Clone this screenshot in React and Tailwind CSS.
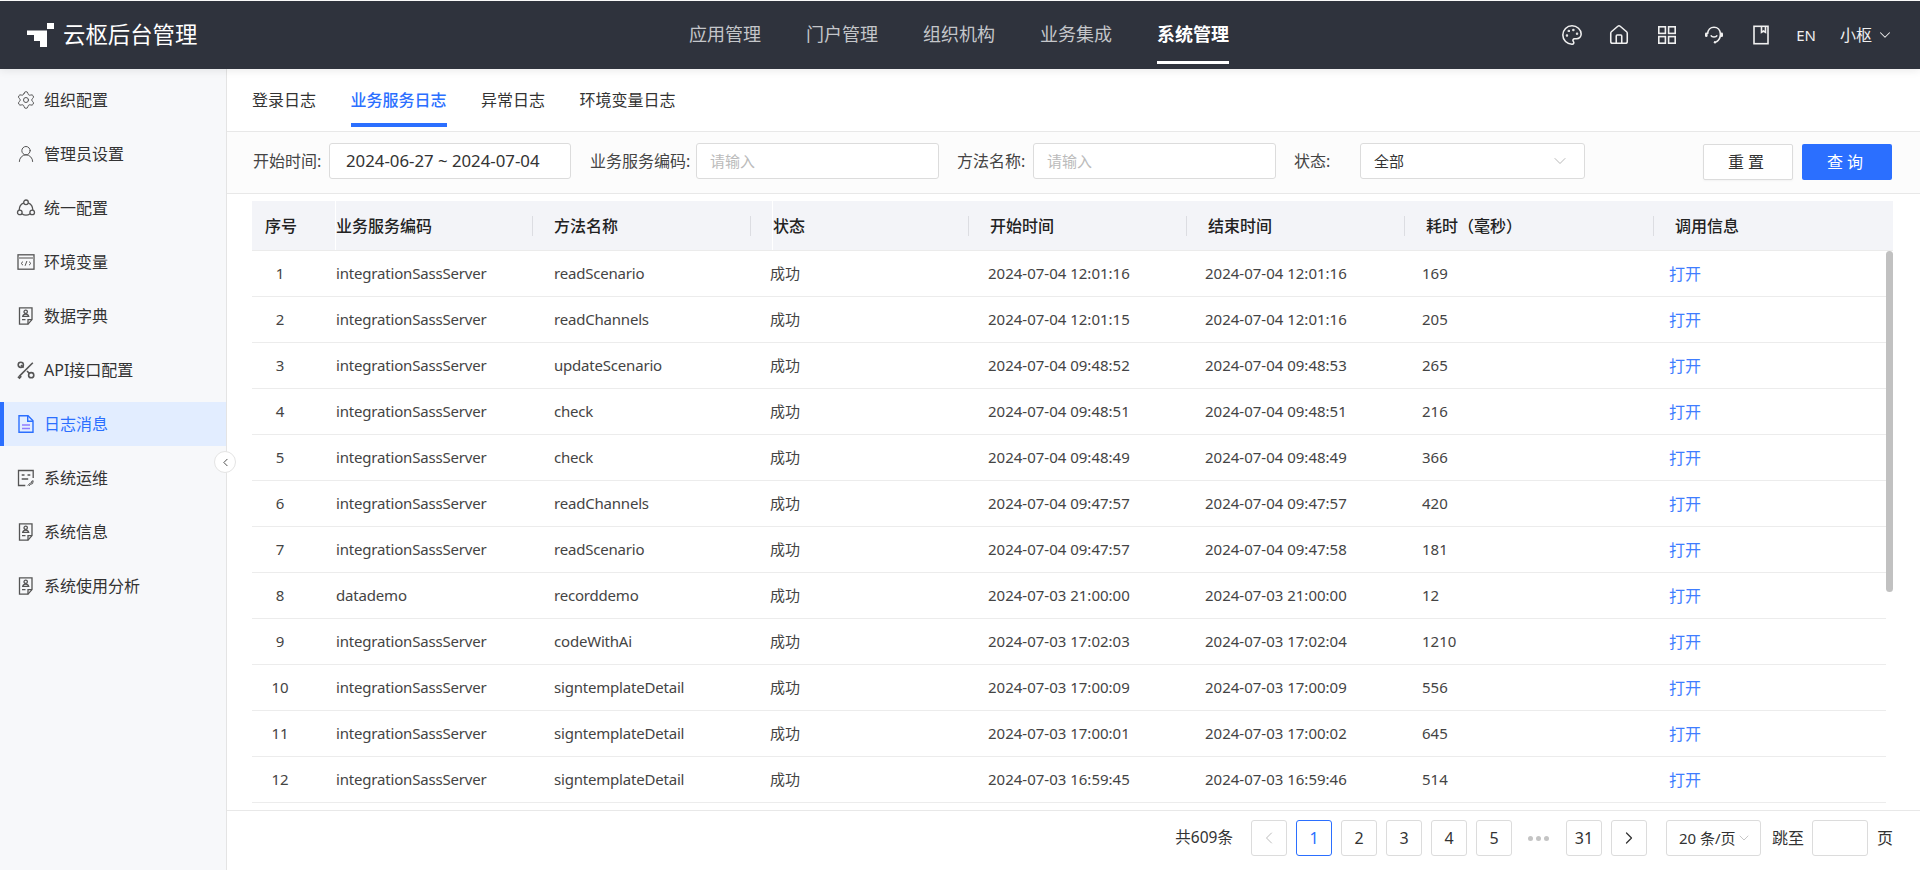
import { ChevronDown, ChevronLeft, ChevronRight, House, Palette, Settings, UserRound } from 'lucide-react';

const FONT = "font-['Noto_Sans','Noto_Sans_CJK_SC',sans-serif]";

const navItems = ['应用管理', '门户管理', '组织机构', '业务集成', '系统管理'];
const tabs = ['登录日志', '业务服务日志', '异常日志', '环境变量日志'];

const rows = [
  ['integrationSassServer', 'readScenario', '2024-07-04 12:01:16', '2024-07-04 12:01:16', '169'],
  ['integrationSassServer', 'readChannels', '2024-07-04 12:01:15', '2024-07-04 12:01:16', '205'],
  ['integrationSassServer', 'updateScenario', '2024-07-04 09:48:52', '2024-07-04 09:48:53', '265'],
  ['integrationSassServer', 'check', '2024-07-04 09:48:51', '2024-07-04 09:48:51', '216'],
  ['integrationSassServer', 'check', '2024-07-04 09:48:49', '2024-07-04 09:48:49', '366'],
  ['integrationSassServer', 'readChannels', '2024-07-04 09:47:57', '2024-07-04 09:47:57', '420'],
  ['integrationSassServer', 'readScenario', '2024-07-04 09:47:57', '2024-07-04 09:47:58', '181'],
  ['datademo', 'recorddemo', '2024-07-03 21:00:00', '2024-07-03 21:00:00', '12'],
  ['integrationSassServer', 'codeWithAi', '2024-07-03 17:02:03', '2024-07-03 17:02:04', '1210'],
  ['integrationSassServer', 'signtemplateDetail', '2024-07-03 17:00:09', '2024-07-03 17:00:09', '556'],
  ['integrationSassServer', 'signtemplateDetail', '2024-07-03 17:00:01', '2024-07-03 17:00:02', '645'],
  ['integrationSassServer', 'signtemplateDetail', '2024-07-03 16:59:45', '2024-07-03 16:59:46', '514'],
];

function Logo() {
  return (
    <svg width="27" height="25" viewBox="0 0 27 25" fill="#fff" className="shrink-0">
      <rect x="20" y="0" width="7" height="6" />
      <path d="M0 7.5h20V24h-7v-6H7v-6H0z" />
    </svg>
  );
}

function GridIcon() {
  return (
    <svg width="20" height="20" viewBox="0 0 20 20" fill="none" stroke="currentColor" strokeWidth="1.600">
      <rect x="1.800" y="1.800" width="6.600" height="6.600" />
      <rect x="11.600" y="1.800" width="6.600" height="6.600" />
      <rect x="1.800" y="11.600" width="6.600" height="6.600" />
      <rect x="11.600" y="11.600" width="6.600" height="6.600" />
    </svg>
  );
}

function Headset() {
  return (
    <svg width="20" height="20" viewBox="0 0 20 20" fill="none" stroke="currentColor" strokeWidth="1.600">
      <path d="M3.600 9C3.800 5 6.400 2.300 10 2.300S16.200 5 16.400 9c.1 3.300-1.500 6.400-4.200 8" />
      <path d="M6.800 10.300c1.300 2.300 5.100 2.300 6.400 0" />
      <rect x="1" y="7.500" width="2.600" height="4.600" rx="1.300" fill="currentColor" stroke="none" />
      <rect x="16.400" y="7.500" width="2.600" height="4.600" rx="1.300" fill="currentColor" stroke="none" />
      <circle cx="11" cy="17.300" r="1.200" fill="currentColor" stroke="none" />
    </svg>
  );
}

function Book() {
  return (
    <svg width="20" height="20" viewBox="0 0 20 20" fill="none" stroke="currentColor" strokeWidth="1.600">
      <rect x="3" y="1.300" width="14" height="17.400" />
      <path d="M10.500 1.300v6l2-1.300 2 1.300v-6" />
    </svg>
  );
}

function DocPerson() {
  return (
    <svg width="20" height="20" viewBox="0 0 20 20" fill="none" stroke="#555" strokeWidth="1.300">
      <path d="M3.500 1.800h12.500v11.800l-4 4.600H3.500z" />
      <path d="M16 13.600h-4v4.600" />
      <circle cx="9.700" cy="5.800" r="1.700" />
      <path d="M6.700 10.300c.4-1.700 1.600-2.200 3-2.200s2.600.5 3 2.200zM6 13.600h3.500" />
    </svg>
  );
}

function Triad() {
  return (
    <svg width="20" height="20" viewBox="0 0 20 20" fill="none" stroke="#555" strokeWidth="1.300">
      <circle cx="10" cy="4.300" r="2.300" />
      <circle cx="3.800" cy="14.400" r="2.300" />
      <circle cx="16.200" cy="14.400" r="2.300" />
      <path d="M7.800 4.800c-2.900 1.200-4.600 3.800-4.600 7.300M12.200 4.800c2.900 1.200 4.600 3.800 4.600 7.300M5.800 15.700c2.600 1.800 5.800 1.800 8.400 0" />
    </svg>
  );
}

function EnvWindow() {
  return (
    <svg width="20" height="20" viewBox="0 0 20 20" fill="none" stroke="#555" strokeWidth="1.300">
      <rect x="2" y="2.800" width="16" height="14.400" />
      <path d="M2 6h16" strokeWidth="1.800" stroke="#999" />
      <path d="M7 9.600l-1.900 1.800L7 13.200M13 9.600l1.900 1.800L13 13.200M10.900 9l-1.800 4.800" strokeWidth="1" />
    </svg>
  );
}

function Tools() {
  return (
    <svg width="20" height="20" viewBox="0 0 20 20" fill="none" stroke="#555" strokeWidth="1.600">
      <path d="M16.800 2.800L3.200 16.400" />
      <path d="M7.600 7.600L5 5" />
      <circle cx="4.800" cy="4.800" r="2.600" />
      <circle cx="15.200" cy="15.200" r="2.600" />
      <path d="M11 11l2.400 2.400" />
      <path d="M2 16.600l1.500 1.300 1.700-1.700" strokeWidth="1.900" />
    </svg>
  );
}

function LogDoc() {
  return (
    <svg width="20" height="20" viewBox="0 0 20 20" fill="none" stroke="#2b6fff" strokeWidth="1.400">
      <path d="M3 1.800h9l5 5v11.400H3z" />
      <path d="M11.700 1.800v5.400H17" />
      <path d="M6 11h8M6 14.500h8" stroke="#8f7cff" />
    </svg>
  );
}

function OpsBoard() {
  return (
    <svg width="20" height="20" viewBox="0 0 20 20" fill="none" stroke="#555" strokeWidth="1.300">
      <path d="M17.200 10V2.500H2.500v15h6.800" />
      <path d="M5.700 7h2.800M11.500 7h2.800M5.700 11h6.500" />
      <path d="M11.800 17.500l2.500-2.500 1.100-.2.500-1.800 1.300-.2-.6 2.800-2.200.7-1.500 1.700" strokeWidth="1" />
    </svg>
  );
}

const menu = [
  { label: '组织配置', icon: <Settings size={20} strokeWidth={1.2} className="text-[#555]" /> },
  { label: '管理员设置', icon: <UserRound size={20} strokeWidth={1.2} className="text-[#555]" /> },
  { label: '统一配置', icon: <Triad /> },
  { label: '环境变量', icon: <EnvWindow /> },
  { label: '数据字典', icon: <DocPerson /> },
  { label: 'API接口配置', icon: <Tools /> },
  { label: '日志消息', icon: <LogDoc />, active: true },
  { label: '系统运维', icon: <OpsBoard /> },
  { label: '系统信息', icon: <DocPerson /> },
  { label: '系统使用分析', icon: <DocPerson /> },
];

function Header() {
  return (
    <header className="h-[68px] shrink-0 bg-[#2f333d] flex items-start text-white shadow-[0_2px_8px_rgba(0,0,0,0.08)] z-10">
      <div className="w-[689px] h-full shrink-0 flex items-center pl-[27px] gap-[9px]">
        <Logo />
        <span className="text-[22.4px] leading-none">云枢后台管理</span>
      </div>
      <nav className="flex gap-[45px]">
        {navItems.map((item, i) => (
          <div
            key={item}
            className={
              i === 4
                ? 'h-[63px] pt-[20px] text-[18px] leading-[26px] font-bold text-white border-b-[3px] border-white'
                : 'h-[63px] pt-[20px] text-[18px] leading-[26px] text-[#c4c6ca]'
            }
          >
            {item}
          </div>
        ))}
      </nav>
      <div className="ml-auto h-full flex items-center pr-[26px] text-[#f0f0f0]">
        <div className="flex items-center gap-[27px] mr-[25px]">
          <Palette size={22} strokeWidth={1.7} />
          <House size={22} strokeWidth={1.7} className="-ml-[2px]" />
          <GridIcon />
          <Headset />
          <Book />
        </div>
        <span className="text-[15px] leading-none mr-[24px]">EN</span>
        <span className="text-[16px] leading-none">小枢</span>
        <ChevronDown size={18} strokeWidth={1.4} className="ml-[4px]" />
      </div>
    </header>
  );
}

function Sidebar() {
  return (
    <aside className="relative w-[227px] shrink-0 bg-[#f7f8fa] border-r border-[#e4e4e4] pt-[9px] flex flex-col gap-[10px]">
      {menu.map((m) => (
        <div
          key={m.label}
          className={
            m.active
              ? 'h-[44px] flex items-center gap-[8px] pl-[12px] bg-[#e2edff] border-l-4 border-[#2b6fff] text-[#2b6fff] text-[16px]'
              : 'h-[44px] flex items-center gap-[8px] pl-[16px] text-[#333] text-[16px]'
          }
        >
          <span className="w-5 flex justify-center shrink-0">{m.icon}</span>
          <span>{m.label}</span>
        </div>
      ))}
      <div className="absolute left-[214px] top-[382px] w-[22px] h-[22px] rounded-full bg-white border border-[#e4e4e4] flex items-center justify-center text-[#333]">
        <ChevronLeft size={13} strokeWidth={1.6} />
      </div>
    </aside>
  );
}

function Field({ label, labelClass, className, children }) {
  return (
    <>
      <span className={`text-[16px] text-[#444] whitespace-nowrap shrink-0 ${labelClass}`}>{label}</span>
      <div className={`h-9 bg-white border border-[#dcdcdc] rounded-[3px] flex items-center shrink-0 ${className}`}>
        {children}
      </div>
    </>
  );
}

function FilterBar() {
  return (
    <div className="h-[62px] shrink-0 bg-[#fcfcfc] border-b border-[#e8e8e8] flex items-center pl-[26px] pb-[3px]">
      <Field label="开始时间:" labelClass="w-[76px]" className="w-[242px] pl-4 text-[#333] text-[16.8px] mr-[19px]">
        2024-06-27 ~ 2024-07-04
      </Field>
      <Field label="业务服务编码:" labelClass="w-[106px]" className="w-[243px] pl-[13px] text-[#bbb] text-[15px] mr-[18px]">
        请输入
      </Field>
      <Field label="方法名称:" labelClass="w-[76px]" className="w-[243px] pl-[13px] text-[#bbb] text-[15px] mr-[18px]">
        请输入
      </Field>
      <Field label="状态:" labelClass="w-[66px]" className="w-[225px] pl-[13px] pr-[14px] text-[#333] text-[15px] justify-between">
        全部
        <ChevronDown size={20} strokeWidth={1} className="text-[#aaa]" />
      </Field>
      <button className="ml-[118px] w-[90px] h-9 mt-[2px] bg-white border border-[#dcdcdc] rounded-[2px] text-[16px] text-[#333] tracking-[4px] shadow-[0_1px_2px_rgba(0,0,0,0.04)]">
        重置
      </button>
      <button className="ml-[9px] w-[90px] h-9 mt-[2px] bg-[#2b6fff] rounded-[2px] text-[16px] text-white tracking-[4px]">
        查询
      </button>
    </div>
  );
}

function HeadCell({ children, sep = true, className = '' }) {
  return (
    <div className={`flex items-center justify-between pr-[21px] ${className}`}>
      <span>{children}</span>
      {sep && <i className="w-px h-5 bg-[#dcdde2]" />}
    </div>
  );
}

function LogTable() {
  return (
    <div className="flex-1 min-h-0 pl-[25px] pr-[27px] pt-[7px] flex flex-col">
      <div className="h-[50px] shrink-0 bg-[#f3f4f8] border-b border-[#ebebeb] grid grid-cols-[84px_218px_218px_218px_218px_218px_249px_1fr] text-[16px] font-medium text-[#222]">
        <div className="border-r border-white flex items-center">
          <span className="w-[58px] text-center">序号</span>
        </div>
        <HeadCell>业务服务编码</HeadCell>
        <HeadCell>方法名称</HeadCell>
        <HeadCell className="border-l border-white">状态</HeadCell>
        <HeadCell>开始时间</HeadCell>
        <HeadCell>结束时间</HeadCell>
        <HeadCell>耗时（毫秒）</HeadCell>
        <HeadCell sep={false}>调用信息</HeadCell>
      </div>
      <div className="flex">
        <div className="flex-1 min-w-0">
          {rows.map((r, i) => (
            <div
              key={i}
              className="h-[46px] border-b border-[#ececec] grid grid-cols-[84px_218px_216px_218px_217px_217px_247px_1fr] items-center text-[15px] text-[#444]"
            >
              <span className="w-14 text-center">{i + 1}</span>
              <span className="tracking-[-0.18px]">{r[0]}</span>
              <span className="tracking-[-0.2px]">{r[1]}</span>
              <span>成功</span>
              <span>{r[2]}</span>
              <span>{r[3]}</span>
              <span>{r[4]}</span>
              <span className="text-[16px] text-[#3f7dff]">打开</span>
            </div>
          ))}
        </div>
        <div className="w-[7px] shrink-0">
          <div className="h-[341px] rounded-[4px] bg-[#c1c1c1]" />
        </div>
      </div>
    </div>
  );
}

function PageBtn({ children, active }) {
  return (
    <div
      className={
        active
          ? 'w-9 h-9 flex items-center justify-center rounded-[3px] border border-[#2b6fff] text-[#2b6fff] bg-white'
          : 'w-9 h-9 flex items-center justify-center rounded-[3px] border border-[#dcdcdc] bg-white'
      }
    >
      {children}
    </div>
  );
}

function Pagination() {
  return (
    <div className="h-[60px] shrink-0 border-t border-[#e8e8e8] flex items-start justify-end pt-[9px] pr-[27px] text-[16px] text-[#333]">
      <div className="flex items-center h-9">
        <span className="mr-[18px] text-[15.5px]">共609条</span>
        <div className="flex items-center gap-[9px]">
          <PageBtn><ChevronLeft size={20} strokeWidth={1.2} className="text-[#bbb]" /></PageBtn>
          <PageBtn active>1</PageBtn>
          <PageBtn>2</PageBtn>
          <PageBtn>3</PageBtn>
          <PageBtn>4</PageBtn>
          <PageBtn>5</PageBtn>
          <div className="w-9 flex justify-center gap-[3px]">
            <i className="w-[5px] h-[5px] rounded-full bg-[#c4c4c4]" />
            <i className="w-[5px] h-[5px] rounded-full bg-[#c4c4c4]" />
            <i className="w-[5px] h-[5px] rounded-full bg-[#c4c4c4]" />
          </div>
          <PageBtn>31</PageBtn>
          <PageBtn><ChevronRight size={20} strokeWidth={1.5} /></PageBtn>
        </div>
        <div className="ml-[19px] w-[95px] h-9 border border-[#dcdcdc] rounded-[3px] bg-white flex items-center pl-[12px] whitespace-nowrap text-[15px]">
          20 条/页
          <ChevronDown size={16} strokeWidth={1} className="text-[#aaa] shrink-0" />
        </div>
        <span className="ml-[11px]">跳至</span>
        <div className="ml-[8px] w-[56px] h-9 border border-[#dcdcdc] rounded-[3px] bg-white" />
        <span className="ml-[9px]">页</span>
      </div>
    </div>
  );
}

export default function App() {
  return (
    <div className={`h-screen w-full overflow-hidden bg-white pt-px flex flex-col ${FONT}`}>
      <Header />
      <div className="flex flex-1 min-h-0">
        <Sidebar />
        <main className="flex-1 min-w-0 flex flex-col">
          <div className="h-[63px] shrink-0 border-b border-[#e8e8e8] flex gap-[34.5px] pl-[25px] text-[16px] text-[#333]">
            {tabs.map((t, i) => (
              <div
                key={t}
                className={
                  i === 1
                    ? 'h-[58px] pt-[19px] leading-6 border-b-4 border-[#2b6fff] text-[#2b6fff] font-medium'
                    : 'h-[58px] pt-[19px] leading-6'
                }
              >
                {t}
              </div>
            ))}
          </div>
          <FilterBar />
          <LogTable />
          <Pagination />
        </main>
      </div>
    </div>
  );
}
